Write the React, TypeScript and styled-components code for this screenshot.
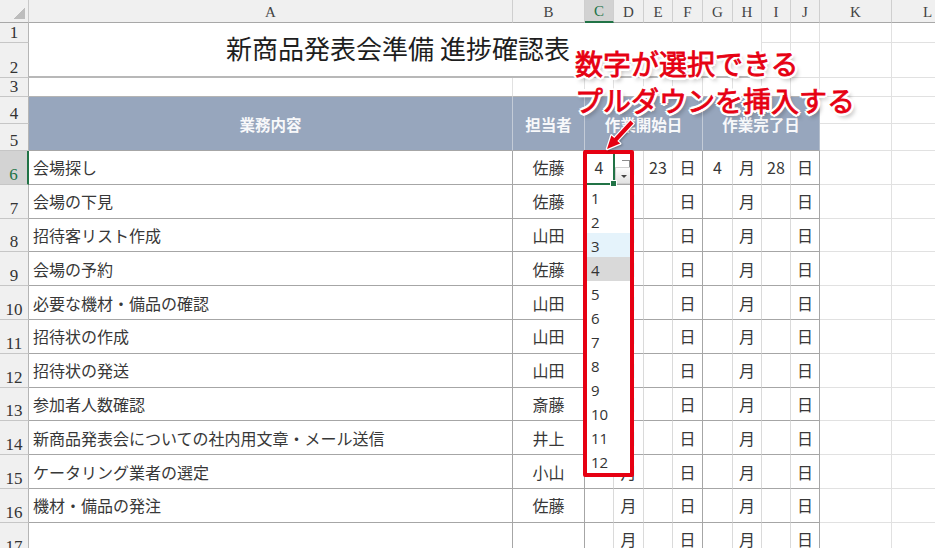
import * as React from 'react';
import styled, { createGlobalStyle } from 'styled-components';

const COLS = [29, 484, 72, 29, 30, 29, 30, 30, 29, 29, 29, 72, 72];
const ROWS = [23, 20, 35, 19, 27, 27, ...Array(12).fill(33.8)];
const COL_LABELS = ['A', 'B', 'C', 'D', 'E', 'F', 'G', 'H', 'I', 'J', 'K', 'L'];

const GRID_LINE = '#e1e1e1';
const TABLE_LINE = '#a6a6a6';
const INNER_LINE = '#dadada';
const HEAD_BG = '#97a6bd';
const HEAD_LINE = '#c3cbd7';
const EXCEL_GREEN = '#217346';
const RED = '#e60012';

const TASKS = [
  '会場探し',
  '会場の下見',
  '招待客リスト作成',
  '会場の予約',
  '必要な機材・備品の確認',
  '招待状の作成',
  '招待状の発送',
  '参加者人数確認',
  '新商品発表会についての社内用文章・メール送信',
  'ケータリング業者の選定',
  '機材・備品の発注',
  '',
];
const OWNERS = ['佐藤', '佐藤', '山田', '佐藤', '山田', '山田', '山田', '斎藤', '井上', '小山', '佐藤', ''];

const GlobalStyle = createGlobalStyle`
  html, body {
    margin: 0;
    padding: 0;
    background: #fff;
    overflow: hidden;
  }
  body {
    font-family: 'Noto Sans CJK JP', 'Noto Sans', sans-serif;
  }
`;

type Place = { $c: number; $r: number; $cs?: number; $rs?: number };

const placed = (p: Place) =>
  `grid-column: ${p.$c + 1} / span ${p.$cs ?? 1}; grid-row: ${p.$r + 1} / span ${p.$rs ?? 1};`;

const Sheet = styled.div`
  position: relative;
  display: grid;
  grid-template-columns: ${COLS.map((w) => `${w}px`).join(' ')};
  grid-template-rows: ${ROWS.map((h) => `${h}px`).join(' ')};
  width: 935px;
  height: 548px;
  overflow: hidden;
`;

const Corner = styled.div<Place>`
  ${placed}
  box-sizing: border-box;
  background: linear-gradient(to top left, #bdbdbd 50%, transparent 50%) right 3px bottom 3px / 12px 12px
    no-repeat #f0f0f0;
  border-right: 1px solid #c8c8c8;
  border-bottom: 1px solid #a8a8a8;
`;

const ColHead = styled.div<Place & { $active?: boolean }>`
  ${placed}
  box-sizing: border-box;
  display: flex;
  align-items: center;
  justify-content: center;
  padding-top: 2px;
  background: ${(p) => (p.$active ? '#d2d2d2' : '#f0f0f0')};
  border-right: 1px solid #cfcfcf;
  border-bottom: ${(p) => (p.$active ? `2px solid ${EXCEL_GREEN}` : '1px solid #a8a8a8')};
  font-family: 'Liberation Serif', serif;
  font-size: 15px;
  color: ${(p) => (p.$active ? EXCEL_GREEN : '#444')};
`;

const RowHead = styled.div<Place & { $active?: boolean }>`
  ${placed}
  box-sizing: border-box;
  display: flex;
  align-items: flex-end;
  justify-content: center;
  padding-bottom: 1px;
  background: ${(p) => (p.$active ? '#d3d3d3' : '#f0f0f0')};
  border-right: ${(p) => (p.$active ? `2px solid ${EXCEL_GREEN}` : '1px solid #b5b5b5')};
  border-bottom: 1px solid #c6c6c6;
  font-family: 'Liberation Serif', serif;
  font-size: 17px;
  line-height: 1;
  color: ${(p) => (p.$active ? EXCEL_GREEN : '#333')};
`;

const Cell = styled.div<Place & { $right?: string; $bottom?: string; $left?: boolean }>`
  ${placed}
  box-sizing: border-box;
  display: flex;
  align-items: center;
  justify-content: ${(p) => (p.$left ? 'flex-start' : 'center')};
  padding: 0 4px;
  border-right: 1px solid ${(p) => p.$right ?? GRID_LINE};
  border-bottom: 1px solid ${(p) => p.$bottom ?? GRID_LINE};
  font-size: 16px;
  color: #383838;
  white-space: nowrap;
  overflow: hidden;
`;

const TitleCell = styled.div<Place>`
  ${placed}
  box-sizing: border-box;
  display: flex;
  align-items: center;
  justify-content: center;
  padding: 0 0 4px 6px;
  border-right: 1px solid ${GRID_LINE};
  border-bottom: 2px solid #b8b8b8;
  font-size: 26px;
  color: #1e1e1e;
  white-space: nowrap;
`;

const HeadCell = styled.div<Place & { $right?: string }>`
  ${placed}
  box-sizing: border-box;
  display: flex;
  align-items: center;
  justify-content: center;
  background: ${HEAD_BG};
  border-right: 1px solid ${(p) => p.$right ?? HEAD_LINE};
  border-bottom: 1px solid ${TABLE_LINE};
  font-size: 15.5px;
  font-weight: 700;
  color: #f7f8fa;
`;

/* call-out text and arrow laid over the sheet */
const Callout = styled.div`
  position: absolute;
  left: 575px;
  top: 45px;
  font-family: 'Noto Sans CJK JP', sans-serif;
  font-weight: 400;
  font-size: 28px;
  line-height: 37px;
  color: ${RED};
  -webkit-text-stroke: 0.8px ${RED};
  white-space: nowrap;
  text-shadow: 2px 0 0 #fff, -2px 0 0 #fff, 0 2px 0 #fff, 0 -2px 0 #fff, 2px 2px 0 #fff, -2px -2px 0 #fff,
    2px -2px 0 #fff, -2px 2px 0 #fff, 3px 0 0 #fff, -3px 0 0 #fff, 0 3px 0 #fff, 0 -3px 0 #fff,
    3px 4px 4px rgba(0, 0, 0, 0.35);
`;

const Arrow = styled.svg`
  position: absolute;
  left: 600px;
  top: 115px;
  width: 40px;
  height: 40px;
  overflow: visible;
  filter: drop-shadow(1px 1px 1px rgba(0, 0, 0, 0.3));
`;

/* open validation drop-down on C6, framed in red */
const DropOverlay = styled.div`
  position: absolute;
  left: 583px;
  top: 150px;
  width: 51px;
  height: 327px;
  display: flex;
  flex-direction: column;

  &::after {
    content: '';
    position: absolute;
    inset: 0;
    border: 4px solid ${RED};
    border-radius: 2px;
    pointer-events: none;
  }
`;

const ActiveRow = styled.div`
  display: flex;
  height: 35px;
  flex: none;
  padding-left: 1px;
`;

const Selection = styled.div`
  position: relative;
  width: 31px;
  box-sizing: border-box;
  border: 2px solid ${EXCEL_GREEN};
`;

const FillHandle = styled.div`
  position: absolute;
  right: -4px;
  bottom: -4px;
  width: 5px;
  height: 5px;
  background: ${EXCEL_GREEN};
  border: 1px solid #fff;
`;

const ButtonStack = styled.div`
  display: flex;
  flex-direction: column;
  justify-content: flex-end;
  align-items: flex-start;
  padding-bottom: 1px;
`;

const DropTab = styled.div`
  width: 7px;
  height: 6px;
  margin-left: 7px;
  border-top: 1px solid #8c8c8c;
  border-right: 1px solid #8c8c8c;
  background: #fff;
`;

const DropButton = styled.div`
  width: 18px;
  height: 17px;
  box-sizing: border-box;
  display: flex;
  align-items: center;
  justify-content: center;
  background: linear-gradient(#fdfdfd, #e2e2e2);
  border: 1px solid #cfcfcf;
`;

const Caret = styled.div`
  width: 0;
  height: 0;
  margin-top: 2px;
  border-left: 3px solid transparent;
  border-right: 3px solid transparent;
  border-top: 3px solid #444;
`;

const DropList = styled.div`
  flex: 1;
  margin: 0 4px 4px;
  background: #fff;
`;

const DropItem = styled.div<{ $state?: 'hover' | 'current' }>`
  height: 24px;
  display: flex;
  align-items: center;
  padding: 2px 0 0 4px;
  box-sizing: border-box;
  background: ${(p) => (p.$state === 'hover' ? '#e5f3fb' : p.$state === 'current' ? '#d9d9d9' : 'transparent')};
  font-family: 'Open Sans', 'Noto Sans', sans-serif;
  font-size: 15px;
  color: #333;
`;

function rowValues(i: number): string[] {
  const first = i === 0;
  return [
    TASKS[i],
    OWNERS[i],
    first ? '4' : '',
    '月',
    first ? '23' : '',
    '日',
    first ? '4' : '',
    '月',
    first ? '28' : '',
    '日',
  ];
}

const App: React.FC = () => {
  const cells: React.ReactNode[] = [];

  cells.push(<Corner key="corner" $c={0} $r={0} />);
  COL_LABELS.forEach((label, i) =>
    cells.push(
      <ColHead key={`ch${i}`} $c={i + 1} $r={0} $active={label === 'C'}>
        {label}
      </ColHead>,
    ),
  );
  for (let r = 1; r <= 17; r++) {
    cells.push(
      <RowHead key={`rh${r}`} $c={0} $r={r} $active={r === 6}>
        {r}
      </RowHead>,
    );
  }

  // rows 1-2: title, merged A:H
  cells.push(
    <TitleCell key="title" $c={1} $r={1} $cs={8} $rs={2}>
      新商品発表会準備 進捗確認表
    </TitleCell>,
  );
  for (let r = 1; r <= 2; r++) {
    for (let c = 9; c <= 12; c++) cells.push(<Cell key={`t${r}-${c}`} $c={c} $r={r} />);
  }

  // row 3: spacer
  for (let c = 1; c <= 12; c++) {
    cells.push(<Cell key={`s${c}`} $c={c} $r={3} $bottom={c <= 10 ? '#b4b4b4' : undefined} />);
  }

  // rows 4-5: table header
  cells.push(
    <HeadCell key="hA" $c={1} $r={4} $rs={2}>
      業務内容
    </HeadCell>,
    <HeadCell key="hB" $c={2} $r={4} $rs={2}>
      担当者
    </HeadCell>,
    <HeadCell key="hC" $c={3} $r={4} $cs={4} $rs={2}>
      作業開始日
    </HeadCell>,
    <HeadCell key="hG" $c={7} $r={4} $cs={4} $rs={2} $right="#b5bfcd">
      作業完了日
    </HeadCell>,
  );
  for (let r = 4; r <= 5; r++) {
    for (let c = 11; c <= 12; c++) cells.push(<Cell key={`h${r}-${c}`} $c={c} $r={r} />);
  }

  // rows 6-17: data
  for (let i = 0; i < 12; i++) {
    const r = 6 + i;
    rowValues(i).forEach((v, k) => {
      const c = k + 1;
      const outer = c === 1 || c === 2 || c === 6 || c === 10;
      cells.push(
        <Cell key={`d${r}-${c}`} $c={c} $r={r} $left={c === 1} $right={outer ? TABLE_LINE : INNER_LINE} $bottom={TABLE_LINE}>
          {v}
        </Cell>,
      );
    });
    for (let c = 11; c <= 12; c++) cells.push(<Cell key={`e${r}-${c}`} $c={c} $r={r} />);
  }

  return (
    <>
      <GlobalStyle />
      <Sheet>
        {cells}
        <DropOverlay>
          <ActiveRow>
            <Selection>
              <FillHandle />
            </Selection>
            <ButtonStack>
              <DropTab />
              <DropButton>
                <Caret />
              </DropButton>
            </ButtonStack>
          </ActiveRow>
          <DropList>
            {Array.from({ length: 12 }, (_, n) => (
              <DropItem key={n} $state={n === 2 ? 'hover' : n === 3 ? 'current' : undefined}>
                {n + 1}
              </DropItem>
            ))}
          </DropList>
        </DropOverlay>
        <Callout>
          数字が選択できる
          <br />
          プルダウンを挿入する
        </Callout>
        <Arrow viewBox="600 115 40 40">
          <polygon
            points="630.5,120.6 633.5,123.4 617.3,140.9 620.2,143.6 607,149 611.4,135.4 614.3,138.1"
            fill={RED}
            stroke="#fff"
            strokeWidth={2.5}
            strokeLinejoin="round"
            paintOrder="stroke"
          />
        </Arrow>
      </Sheet>
    </>
  );
};

export default App;
